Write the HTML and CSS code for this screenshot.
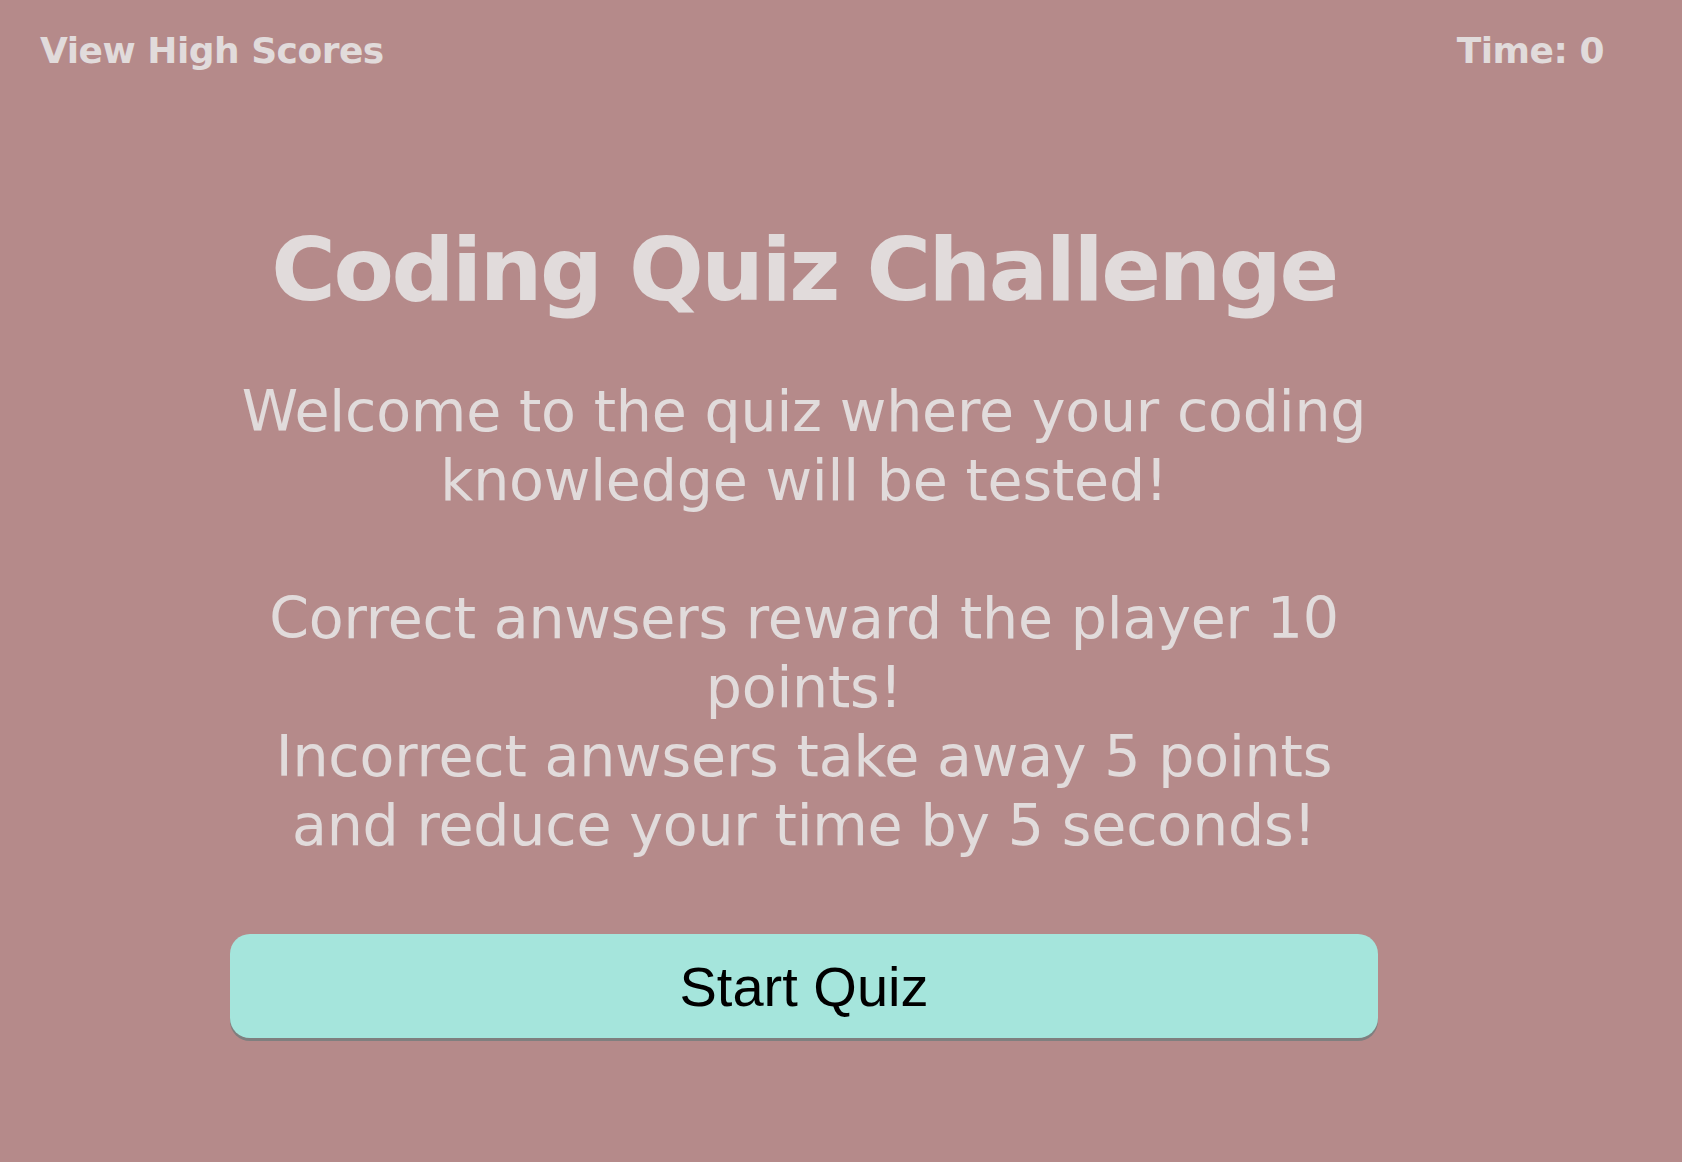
FILE: index.html
```html
<!DOCTYPE html>
<html lang="en">
<head>
<meta charset="utf-8">
<title>Coding Quiz Challenge</title>
<link rel="stylesheet" href="styles.css">
</head>
<body>
<header class="topbar">
  <a class="scores-link" href="#">View High Scores</a>
  <div class="timer">Time: <span class="timer-value">0</span></div>
</header>
<main class="quiz">
  <h1 class="quiz-title">Coding Quiz Challenge</h1>
  <p class="quiz-intro">Welcome to the quiz where your coding knowledge will be tested!<br><br>Correct anwsers reward the player 10 points!<br>Incorrect anwsers take away 5 points and reduce your time by 5 seconds!</p>
  <button class="start-btn" type="button">Start Quiz</button>
</main>
</body>
</html>
```

FILE: styles.css
```css
html, body {
  margin: 0;
  padding: 0;
}
body {
  background: #b58a8a;
  color: #e1dbdb;
  font-family: "DejaVu Sans", Verdana, sans-serif;
  min-height: 1162px;
}
.topbar {
  display: flex;
  justify-content: space-between;
  align-items: flex-start;
  padding: 29px 78px 0 40px;
  font-size: 36px;
  font-weight: bold;
  line-height: 43px;
  letter-spacing: -0.5px;
}
.scores-link {
  color: #e1dbdb;
  text-decoration: none;
}
.quiz {
  display: flex;
  flex-direction: column;
  align-items: stretch;
  width: 1148px;
  margin: 145px 0 0 230px;
  text-align: center;
}
.quiz-title {
  margin: 0;
  font-size: 88px;
  font-weight: bold;
  line-height: 106px;
  letter-spacing: -2.4px;
}
.quiz-intro {
  margin: 54px 0 0;
  font-size: 57px;
  line-height: 69px;
  letter-spacing: -0.2px;
}
.start-btn {
  margin-top: 74px;
  height: 104px;
  border: none;
  border-radius: 20px;
  background: #a5e5dc;
  box-shadow: 0 3px 0 #7f7f7f;
  color: #000;
  font-family: "Liberation Sans", Arial, sans-serif;
  font-size: 56px;
}
```
